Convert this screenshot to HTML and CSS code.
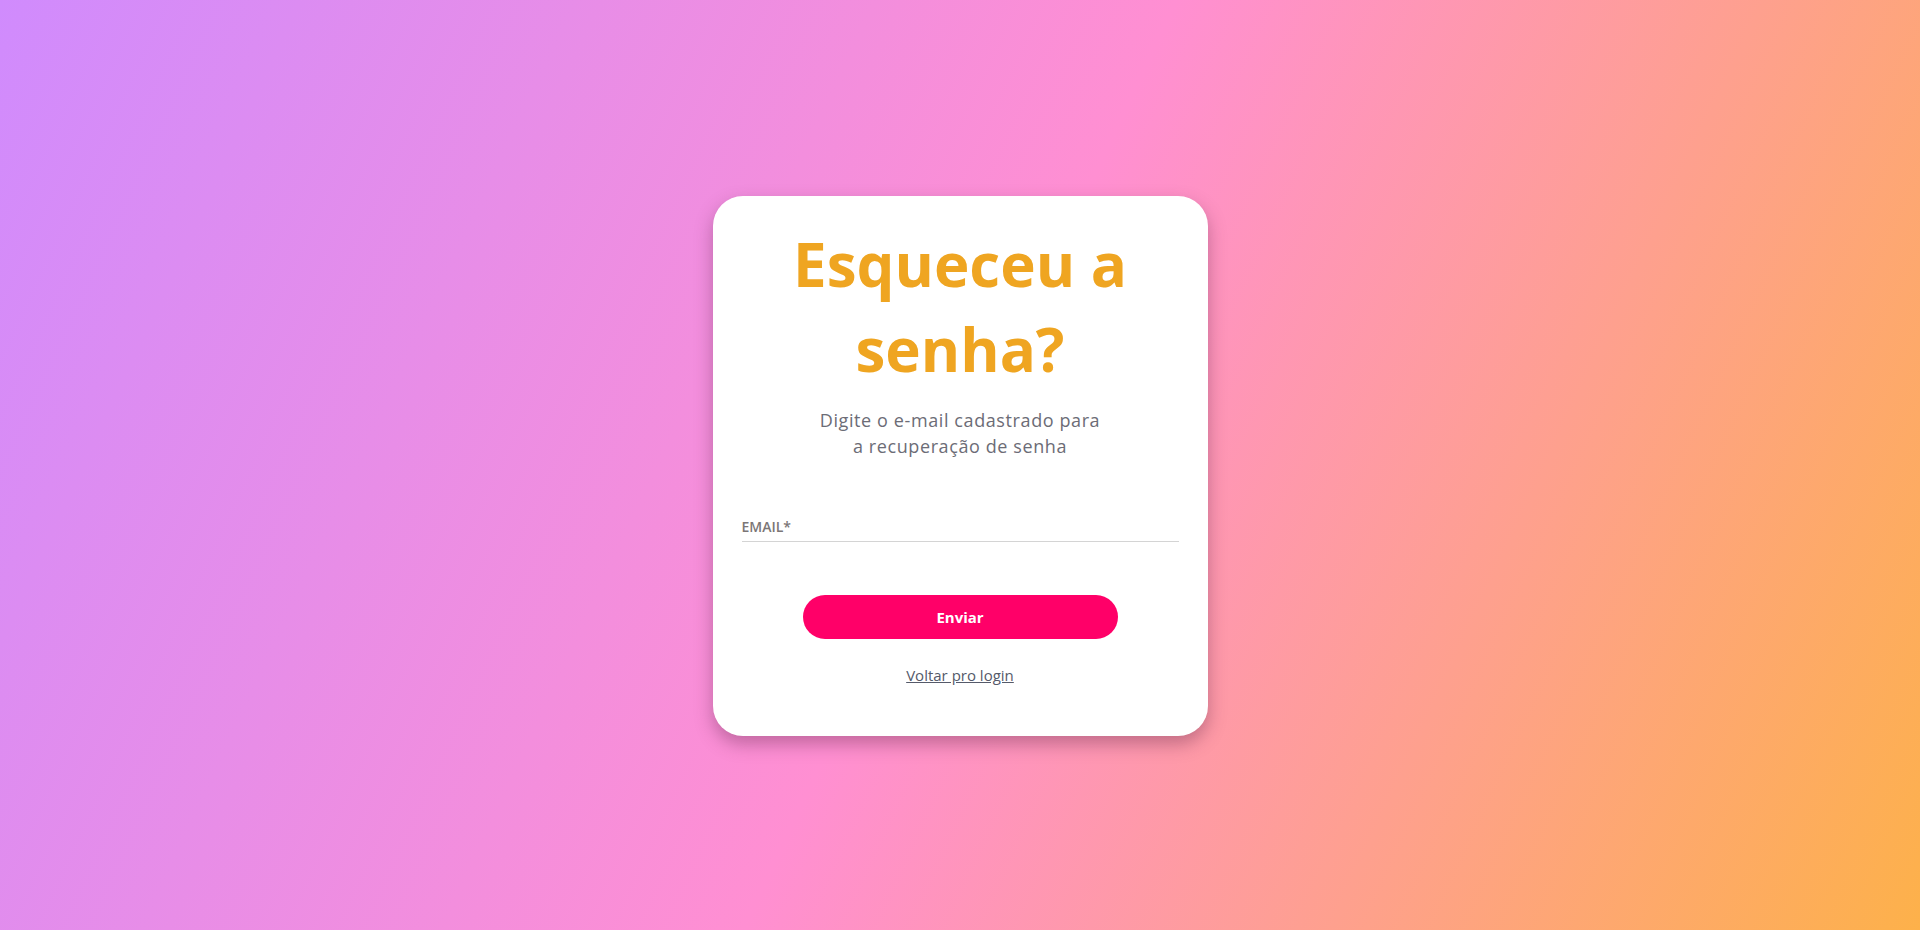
FILE: index.html
```html
<!DOCTYPE html>
<html lang="pt-BR">
<head>
<meta charset="utf-8">
<title>Esqueceu a senha?</title>
<link rel="stylesheet" href="styles.css">
</head>
<body>
<main class="page">
  <section class="card">
    <h1 class="title">Esqueceu a<br>senha?</h1>
    <p class="subtitle">Digite o e-mail cadastrado para<br>a recuperação de senha</p>
    <form class="form">
      <label class="field">
        <span class="field-label">EMAIL*</span>
        <input class="field-input" type="email">
      </label>
      <button class="btn" type="button">Enviar</button>
      <a class="back-link" href="#">Voltar pro login</a>
    </form>
  </section>
</main>
</body>
</html>
```

FILE: styles.css
```css
* { box-sizing: border-box; }
html, body { margin: 0; height: 100%; }
body {
  font-family: "Open Sans", "Noto Sans", sans-serif;
  background: linear-gradient(115deg, #d08bfd 0%, #ff8fd2 50%, #fdb14a 100%);
}
.page {
  height: 930px;
  display: flex;
  align-items: center;
  justify-content: center;
}
.card {
  width: 495px;
  height: 540px;
  background: #fff;
  border-radius: 30px;
  box-shadow: 0 8px 18px rgba(80, 30, 60, 0.35);
  padding: 26px 29px 0;
  display: flex;
  flex-direction: column;
  align-items: center;
  margin-top: 1px;
}
.title {
  margin: 0;
  font-size: 60px;
  line-height: 85px;
  font-weight: 700;
  color: #efa521;
  text-align: center;
  letter-spacing: 0;
}
.subtitle {
  margin: 15px 0 0;
  font-size: 18px;
  line-height: 26px;
  letter-spacing: 0.6px;
  color: #6c6c76;
  text-align: center;
}
.form {
  width: 100%;
  display: flex;
  flex-direction: column;
  align-items: center;
  margin-top: 58px;
}
.field {
  width: 100%;
  display: block;
  border-bottom: 1px solid #d4d4d4;
  padding-bottom: 4px;
}
.field-label {
  display: block;
  font-size: 14px;
  line-height: 20px;
  font-weight: 600;
  color: #7b7676;
}
.field-input {
  display: none;
}
.btn {
  margin-top: 53px;
  width: 315px;
  height: 44px;
  border: none;
  border-radius: 22px;
  background: #ff0068;
  color: #fff;
  font-family: inherit;
  font-size: 15px;
  font-weight: 700;
  cursor: pointer;
}
.back-link {
  margin-top: 25px;
  font-size: 15px;
  line-height: 22px;
  color: #555a6a;
  text-decoration: underline;
}
```
